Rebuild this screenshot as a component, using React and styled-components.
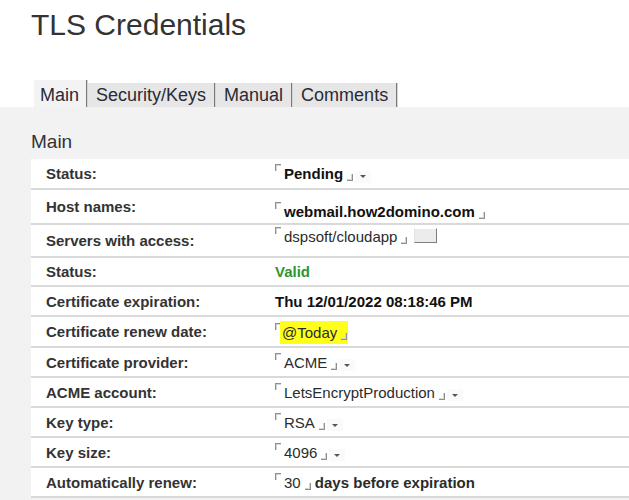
import React from "react";
import styled, { createGlobalStyle } from "styled-components";

const GlobalStyle = createGlobalStyle`
  html, body {
    margin: 0;
    padding: 0;
    background: #ffffff;
    font-family: "Liberation Sans", Arial, sans-serif;
  }
`;

const Page = styled.div`
  width: 629px;
  height: 500px;
  overflow: hidden;
  display: flex;
  flex-direction: column;
`;

const Title = styled.h1`
  margin: 7px 0 0 31px;
  font-size: 30px;
  line-height: 36px;
  font-weight: normal;
  color: #333333;
`;

const TabBar = styled.div`
  display: flex;
  align-items: flex-end;
  margin: 37px 0 0 34px;
  height: 27px;
`;

const Tab = styled.div`
  height: ${(p) => (p.active ? "27px" : "24px")};
  padding: ${(p) => (p.active ? "3px 7px 0 6px" : "0 8px 0 8px")};
  box-sizing: border-box;
  font-size: 18px;
  line-height: 24px;
  color: #2a2a36;
  background: ${(p) => (p.active ? "#f3f3f3" : "#e6e6e6")};
  border-right: 1px solid #7a7a7a;
  box-shadow: 1px 0 0 #d4d4d4;
  margin-right: 1px;
`;

const Panel = styled.div`
  flex: 1;
  background: #f2f2f2;
  padding: 24px 0 0 31px;
`;

const Heading = styled.h2`
  margin: 0 0 6px 0;
  font-size: 19px;
  line-height: 22px;
  font-weight: normal;
  color: #333333;
`;

const Table = styled.table`
  width: 100%;
  border-collapse: collapse;
  table-layout: fixed;
  background: #ffffff;
`;

const Row = styled.tr`
  height: ${(p) => p.h}px;
`;

const Label = styled.td`
  width: 229px;
  padding: 0 0 0 15px;
  border-bottom: 2px solid #d9d9d9;
  font-size: 15px;
  font-weight: bold;
  color: #333333;
  vertical-align: middle;
  white-space: nowrap;
`;

const Value = styled.td`
  padding: ${(p) => p.pt || 0}px 0 ${(p) => p.pb || 0}px 0;
  border-bottom: 2px solid #d9d9d9;
  font-size: 15px;
  color: ${(p) => (p.green ? "#2f952f" : p.strong ? "#111111" : "#2b2b2b")};
  font-weight: ${(p) => (p.strong || p.green ? "bold" : "normal")};
  vertical-align: middle;
  white-space: nowrap;
`;

const Open = styled.span`
  display: inline-block;
  width: 5px;
  height: 6px;
  border-top: 1px solid #8f8f8f;
  border-left: 1px solid #8f8f8f;
  box-shadow: inset 1px 1px 0 #d4d4d4;
  vertical-align: 8px;
  margin-right: 3px;
`;

const Close = styled.span`
  display: inline-block;
  width: 5px;
  height: 6px;
  border-bottom: 1px solid #8f8f8f;
  border-right: 1px solid #8f8f8f;
  box-shadow: inset -1px -1px 0 #d4d4d4;
  vertical-align: -2px;
  margin-left: 4px;
`;

const Highlight = styled.span`
  background: #ffff1a;
  padding: 3px 1px 3px 2px;
  margin-left: -4px;
`;

const Drop = styled.span`
  display: inline-flex;
  align-items: center;
  justify-content: center;
  width: 16px;
  height: 12px;
  margin-left: 2px;
  vertical-align: 1px;
  background: #fafafa;
  &::after {
    content: "";
    border-left: 3px solid transparent;
    border-right: 3px solid transparent;
    border-top: 3px solid #555555;
  }
`;

const PickButton = styled.span`
  display: inline-block;
  width: 21px;
  height: 13px;
  margin-left: 7px;
  vertical-align: -1px;
  background: #ececec;
  border: 1px solid;
  border-color: #ffffff #7d7d7d #7d7d7d #e0e0e0;
`;

const Field = ({ children, drop, pick }) => (
  <>
    <Open />
    {children}
    <Close />
    {drop && <Drop />}
    {pick && <PickButton />}
  </>
);

const App = () => {
  return (
    <Page>
      <GlobalStyle />
      <Title>TLS Credentials</Title>
      <TabBar>
        <Tab active>Main</Tab>
        <Tab>Security/Keys</Tab>
        <Tab>Manual</Tab>
        <Tab>Comments</Tab>
      </TabBar>
      <Panel>
        <Heading>Main</Heading>
        <Table>
          <tbody>
            <Row h={30}>
              <Label>Status:</Label>
              <Value strong>
                <Field drop>Pending</Field>
              </Value>
            </Row>
            <Row h={35}>
              <Label>Host names:</Label>
              <Value strong pt={8}>
                <Field>webmail.how2domino.com</Field>
              </Value>
            </Row>
            <Row h={33}>
              <Label>Servers with access:</Label>
              <Value pb={9}>
                <Field pick>dspsoft/cloudapp</Field>
              </Value>
            </Row>
            <Row h={29}>
              <Label>Status:</Label>
              <Value green>Valid</Value>
            </Row>
            <Row h={30}>
              <Label>Certificate expiration:</Label>
              <Value strong>Thu 12/01/2022 08:18:46 PM</Value>
            </Row>
            <Row h={31}>
              <Label>Certificate renew date:</Label>
              <Value>
                <Open />
                <Highlight>
                  @Today
                  <Close />
                </Highlight>
              </Value>
            </Row>
            <Row h={30}>
              <Label>Certificate provider:</Label>
              <Value>
                <Field drop>ACME</Field>
              </Value>
            </Row>
            <Row h={30}>
              <Label>ACME account:</Label>
              <Value>
                <Field drop>LetsEncryptProduction</Field>
              </Value>
            </Row>
            <Row h={30}>
              <Label>Key type:</Label>
              <Value>
                <Field drop>RSA</Field>
              </Value>
            </Row>
            <Row h={30}>
              <Label>Key size:</Label>
              <Value>
                <Field drop>4096</Field>
              </Value>
            </Row>
            <Row h={30}>
              <Label>Automatically renew:</Label>
              <Value>
                <Field>30</Field> <b>days before expiration</b>
              </Value>
            </Row>
          </tbody>
        </Table>
      </Panel>
    </Page>
  );
};

export default App;
